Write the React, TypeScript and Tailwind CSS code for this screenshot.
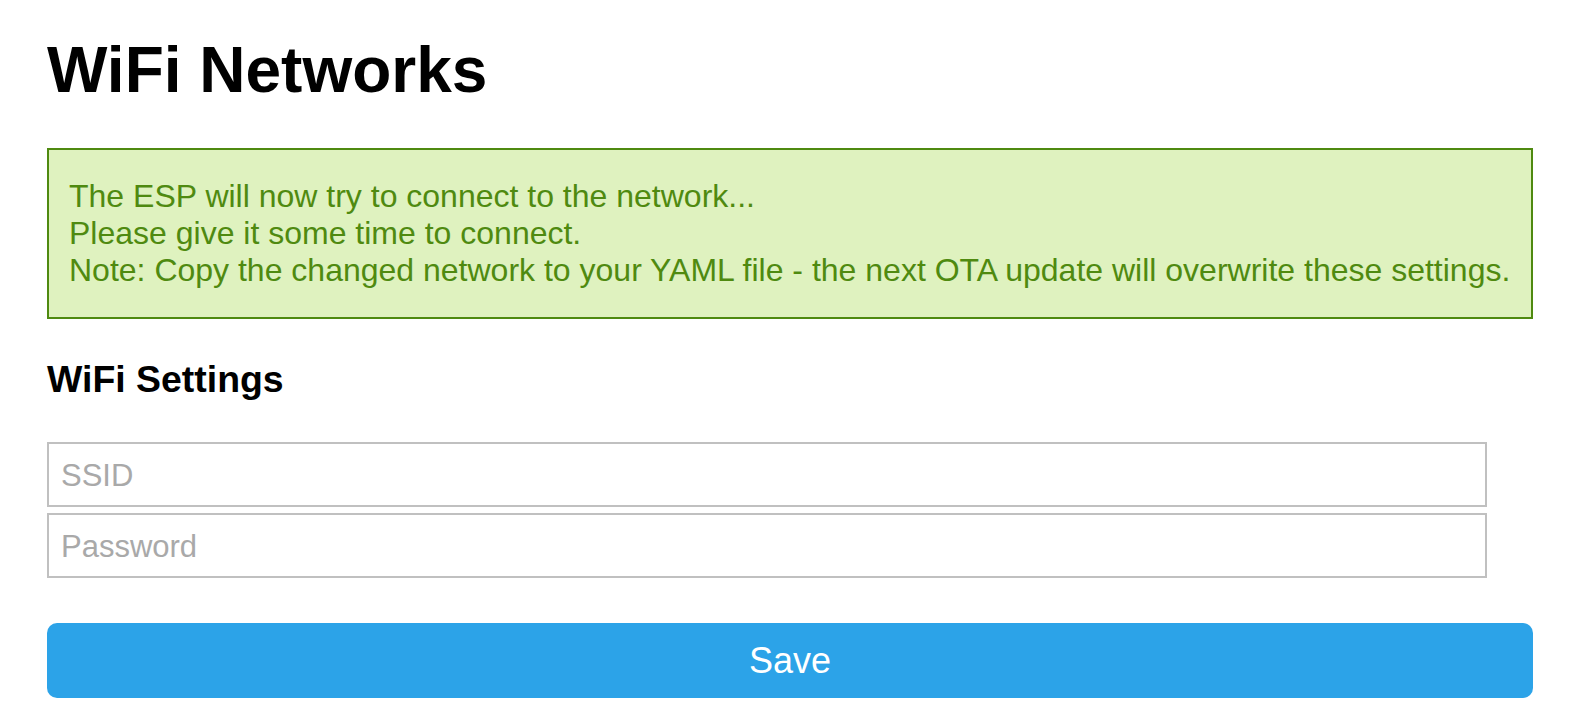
import { useState } from "react";

export default function App() {
  const [ssid, setSsid] = useState("");
  const [psk, setPsk] = useState("");

  return (
    <div className="min-h-screen bg-white pl-[47px] pr-[41px] pt-[33px] font-['Liberation_Sans',Arial,sans-serif] text-black">
      <h1 className="text-[64px] font-bold leading-[74px]">WiFi Networks</h1>

      {/* Status message */}
      <div className="mt-[41px] border-2 border-[#4f8a10] bg-[#dff2bf] px-[20px] pt-[28px] pb-[28px] text-[32px] leading-[37px] text-[#4f8a10]">
        The ESP will now try to connect to the network...
        <br />
        Please give it some time to connect.
        <br />
        Note: Copy the changed network to your YAML file - the next OTA update
        will overwrite these settings.
      </div>

      <h3 className="mt-[39px] text-[37.44px] font-bold leading-[43px]">
        WiFi Settings
      </h3>

      <form
        className="mt-[41px] flex flex-col"
        onSubmit={(e) => e.preventDefault()}
      >
        <div className="flex flex-col gap-[6px]">
          <input
            className="h-[65px] w-[1440px] border-2 border-[#c0c0c0] px-[12px] pt-[3px] text-[31px] outline-none placeholder:text-[#a9a9a9]"
            placeholder="SSID"
            value={ssid}
            onChange={(e) => setSsid(e.target.value)}
          />
          <input
            type="password"
            className="h-[65px] w-[1440px] border-2 border-[#c0c0c0] px-[12px] pt-[3px] text-[31px] outline-none placeholder:text-[#a9a9a9]"
            placeholder="Password"
            value={psk}
            onChange={(e) => setPsk(e.target.value)}
          />
        </div>
        <button
          type="submit"
          className="mt-[45px] h-[75px] w-full rounded-[10px] bg-[#2ca3e8] text-[36px] text-white"
        >
          Save
        </button>
      </form>
    </div>
  );
}
